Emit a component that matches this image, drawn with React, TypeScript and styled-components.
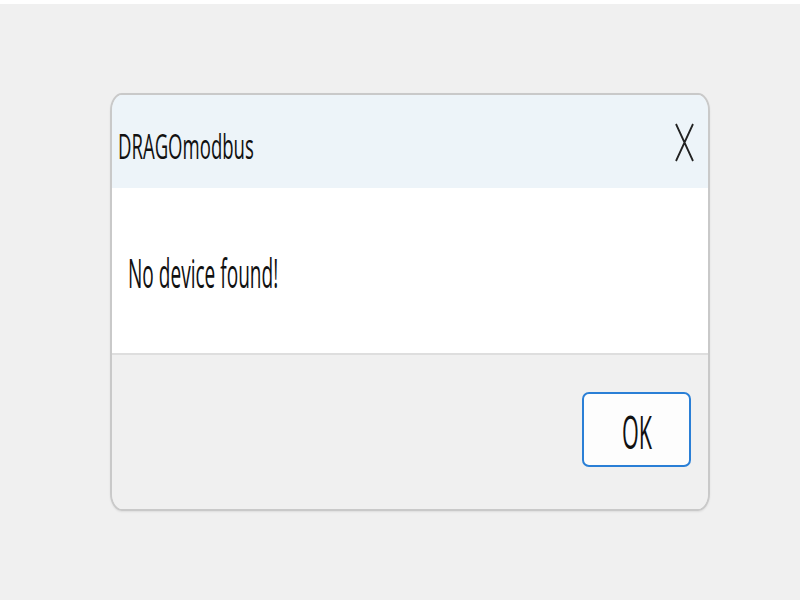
import React from "react";
import styled, { createGlobalStyle } from "styled-components";

const Global = createGlobalStyle`
  html, body { margin: 0; padding: 0; background: #f0f0f0; }
  body { font-family: "Open Sans", "Noto Sans", sans-serif; }
`;

const Page = styled.div`
  width: 800px;
  height: 600px;
  box-sizing: border-box;
  background: #f0f0f0;
  border-top: 4px solid #ffffff;
  padding: 89px 0 0 110px;
`;

const Dialog = styled.div`
  width: 600px;
  height: 418px;
  box-sizing: border-box;
  border: 2px solid #c9c9c9;
  border-radius: 12px / 18px;
  overflow: hidden;
  display: flex;
  flex-direction: column;
  background: #f0f0f0;
  box-shadow: 0 1px 2px rgba(0, 0, 0, 0.08);
`;

const TitleBar = styled.div`
  height: 93px;
  flex: none;
  display: flex;
  justify-content: space-between;
  align-items: flex-start;
  background: #edf4f9;
  padding: 0 14px 0 6px;
`;

const Squeezed = styled.span<{ $size: number; $sx: number; $weight?: number }>`
  display: inline-block;
  font-size: ${(p) => p.$size}px;
  line-height: ${(p) => p.$size}px;
  font-weight: ${(p) => p.$weight ?? 400};
  transform: scaleX(${(p) => p.$sx});
  transform-origin: left center;
  white-space: nowrap;
  color: #111111;
`;

const Title = styled.div`
  margin-top: 33px;
`;

const CloseIcon = styled.svg`
  margin-top: 28px;
  flex: none;
`;

const Body = styled.div`
  height: 167px;
  flex: none;
  background: #ffffff;
  box-sizing: border-box;
  padding: 64px 0 0 16px;
  border-bottom: 2px solid #dedede;
`;

const Footer = styled.div`
  flex: 1;
  display: flex;
  justify-content: flex-end;
  align-items: flex-start;
  padding: 37px 17px 0 0;
  background: #f0f0f0;
`;

const OkButton = styled.button`
  width: 109px;
  height: 75px;
  box-sizing: border-box;
  border: 2px solid #2a7fd6;
  border-radius: 7px;
  background: #fdfdfd;
  display: flex;
  align-items: center;
  justify-content: center;
  padding: 0;
  font-family: inherit;
  cursor: pointer;
`;

const OkLabel = styled.span`
  display: inline-block;
  font-size: 46px;
  line-height: 46px;
  transform: scaleX(0.47);
  color: #111111;
  margin-top: 2px;
`;

export default function App() {
  return (
    <>
      <Global />
      <Page>
        <Dialog>
          <TitleBar>
            <Title>
              <Squeezed $size={35} $sx={0.53}>DRAGOmodbus</Squeezed>
            </Title>
            <CloseIcon width="19" height="39" viewBox="0 0 19 39">
              <path d="M1 1 L18 38 M18 1 L1 38" stroke="#222" strokeWidth="1.8" fill="none" />
            </CloseIcon>
          </TitleBar>
          <Body>
            <Squeezed $size={41} $sx={0.465} $weight={500}>No device found!</Squeezed>
          </Body>
          <Footer>
            <OkButton>
              <OkLabel>OK</OkLabel>
            </OkButton>
          </Footer>
        </Dialog>
      </Page>
    </>
  );
}
